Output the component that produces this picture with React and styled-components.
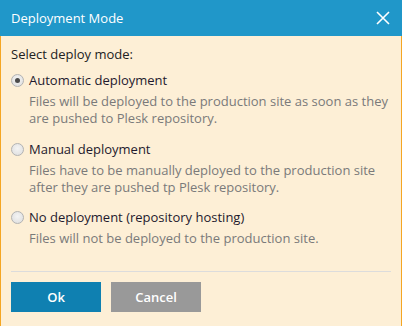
import React from "react";
import styled, { createGlobalStyle } from "styled-components";

const Global = createGlobalStyle`
  html, body { margin: 0; padding: 0; background: #ffffff; }
  body { font-family: "Open Sans", "Noto Sans", sans-serif; }
  * { box-sizing: border-box; }
`;

const Dialog = styled.div`
  width: 402px;
  height: 326px;
  display: flex;
  flex-direction: column;
  overflow: hidden;
`;

const Header = styled.div`
  height: 36px;
  flex: none;
  background: #2097c9;
  display: flex;
  align-items: center;
  justify-content: space-between;
  padding: 0 11px 0 11px;
  color: #ffffff;
  font-size: 13px;
`;

const Title = styled.div`
  line-height: 20px;
  margin-top: -1px;
`;

const CloseButton = styled.button`
  border: 0;
  background: none;
  padding: 0;
  width: 16px;
  height: 16px;
  display: flex;
  cursor: pointer;
`;

const Body = styled.div`
  flex: 1;
  background: #fdefd6;
  border-left: 1px solid #f5a623;
  border-right: 1px solid #f5a623;
  padding: 10px 10px 0 10px;
  font-size: 13px;
  color: #222;
`;

const Prompt = styled.div`
  line-height: 17px;
  margin-bottom: 9px;
`;

const Option = styled.div`
  display: grid;
  grid-template-columns: 18px 1fr;
  margin-bottom: ${(p) => p.$gap}px;
`;

const Radio = styled.span`
  width: 13px;
  height: 13px;
  margin-top: 2px;
  border-radius: 50%;
  border: 1px solid #b3b3b3;
  background: radial-gradient(circle at 50% 40%, #f4f4f4 0%, #dcdcdc 100%);
  display: flex;
  align-items: center;
  justify-content: center;
  &::after {
    content: "";
    display: ${(p) => (p.$checked ? "block" : "none")};
    width: 5px;
    height: 5px;
    border-radius: 50%;
    background: #4a4a4a;
  }
`;

const Label = styled.div`
  line-height: 17px;
  color: #1f1a2e;
`;

const Desc = styled.div`
  grid-column: 2;
  margin-top: 4px;
  line-height: 17px;
  color: #7a7a7a;
`;

const Separator = styled.div`
  height: 1px;
  background: #dcdcdc;
  margin: 0 0 10px 0;
`;

const Footer = styled.div`
  display: flex;
  gap: 10px;
`;

const Button = styled.button`
  width: 90px;
  height: 30px;
  border: 0;
  border-radius: 0;
  font-family: "Open Sans", "Noto Sans", sans-serif;
  font-weight: 600;
  font-size: 13px;
  color: #ffffff;
  background: ${(p) => (p.$primary ? "#0f80b1" : "#999999")};
`;

const options = [
  {
    label: "Automatic deployment",
    desc: "Files will be deployed to the production site as soon as they are pushed to Plesk repository.",
    checked: true,
    gap: 14,
  },
  {
    label: "Manual deployment",
    desc: "Files have to be manually deployed to the production site after they are pushed tp Plesk repository.",
    gap: 13,
  },
  {
    label: "No deployment (repository hosting)",
    desc: "Files will not be deployed to the production site.",
    gap: 24,
  },
];

export default function App() {
  return (
    <>
      <Global />
      <Dialog>
        <Header>
          <Title>Deployment Mode</Title>
          <CloseButton aria-label="Close">
            <svg width="16" height="16" viewBox="0 0 16 16">
              <path d="M2 2 L14 14 M14 2 L2 14" stroke="#fff" strokeWidth="1.6" />
            </svg>
          </CloseButton>
        </Header>
        <Body>
          <Prompt>Select deploy mode:</Prompt>
          {options.map((o) => (
            <Option key={o.label} $gap={o.gap}>
              <Radio $checked={o.checked} />
              <Label>{o.label}</Label>
              <Desc>{o.desc}</Desc>
            </Option>
          ))}
          <Separator />
          <Footer>
            <Button $primary>Ok</Button>
            <Button>Cancel</Button>
          </Footer>
        </Body>
      </Dialog>
    </>
  );
}
